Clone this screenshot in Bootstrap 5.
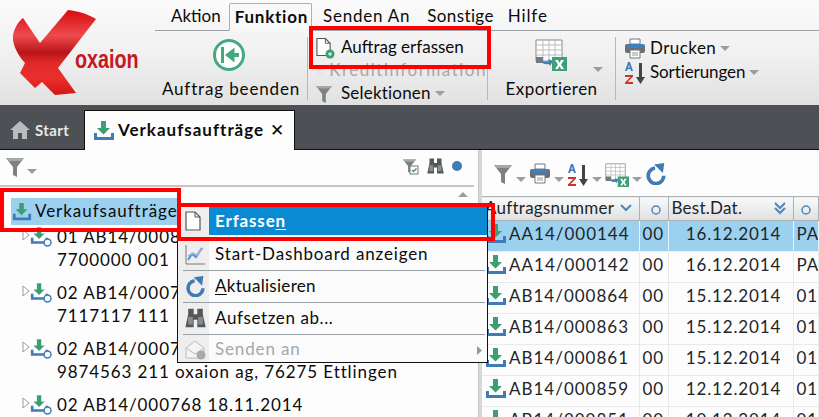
<!DOCTYPE html>
<html lang="de"><head><meta charset="utf-8"><title>oxaion</title>
<link href="https://cdn.jsdelivr.net/npm/bootstrap@5.3.0/dist/css/bootstrap.min.css" rel="stylesheet">
<style>
html,body{margin:0;width:819px;height:417px;overflow:hidden;background:#fdfdfd}
body{font-family:Lato,"Liberation Sans",sans-serif;font-size:17px;color:#0b0b0b;letter-spacing:.85px;line-height:1.2;position:relative}
.ribbon{height:105px;background:linear-gradient(#fbfbfb,#f1f1f1 50%,#e1e1e1)}
.logo-box{width:155px;flex:none;position:relative}
.logo-word{position:absolute;left:75px;top:44px;font:bold 26px "Liberation Sans",sans-serif;letter-spacing:0;color:#c4191f;transform:scaleX(.76);transform-origin:left center}
.menu-row{height:31px;border-bottom:1px solid #9da3a8;padding-left:8px}
.menu-item{padding:6px 8px 0 8px;height:30px}
.menu-on{font-weight:700;border:1px solid #aab0b4;border-bottom:1px solid #f8f8f8;border-radius:2px 2px 0 0;height:28px;margin-top:3px;padding:3px 3px 0 5px;background:#f9f9f9;margin-left:0;letter-spacing:.75px}
.m-akt{letter-spacing:0}
.m-send{margin-left:3px;letter-spacing:.75px}
.m-son{margin-left:1px;letter-spacing:.4px}
.m-hlf{margin-left:-2px}
.rib-body{height:74px;padding-top:6px}
.rib-group{border-right:1px solid #b5b8ba;height:63px;flex:none}
.rg-end{width:153px}
.rg-act{width:180px;padding-left:4px}
.rg-exp{width:128px}
.rib-big{display:flex;flex-direction:column;align-items:center}
.rib-line{height:23px;white-space:nowrap}
.rib-first{margin-top:-1px}
.rl-tall{height:25px}
.ic-end{display:block;margin:2px 4px 0 0}
.ic-act{margin-left:3px;margin-right:4px}
.ic-exp{display:block;margin:2px 0 0 47px}
.lbl-end{margin-top:8px}
.lbl-exp{display:block;text-align:center;margin-top:8px;letter-spacing:.45px}
.car-exp{position:absolute;left:101px;top:30px}
.t-erf{letter-spacing:0}
.t-kre{letter-spacing:1.5px}
.t-sel{letter-spacing:.2px}
.t-dru{letter-spacing:.45px}
.t-sor{letter-spacing:-.1px}
.off{color:#a7a7a7}
.caret-s{display:inline-block;border:5px solid transparent;border-top:5px solid #9a9ea1;border-bottom:0;margin-left:4px;vertical-align:middle}
.car-tb{margin-top:14px;margin-left:0}
.car-lt{margin-top:14px;margin-left:2px}
.tabbar{height:45px;background:#4d5054;border-bottom:1px solid #101010}
.tab-start{color:#e8e8e8;font-weight:700;padding:0 9px;width:84px;margin-top:5px;height:39px;font-size:15px;letter-spacing:.4px}
.tab-act{background:#fdfdfd;font-weight:700;width:211px;height:40px;margin-top:5px;border:1px solid #101010;border-bottom:0;padding-left:8px;letter-spacing:1px}
.ic-tab{margin-right:3px}
.tab-x{margin-left:6px;font-weight:400}
.work{height:267px}
.left-pane{width:478px;flex:none;overflow:hidden;position:relative}
.split{width:4px;flex:none;background:#d6d8da;border-left:1px solid #c2c4c6}
.right-pane{flex:1;min-width:0;overflow:hidden}
.left-tools{height:37px;border-bottom:2px solid #c4c6c8;padding:5px 12px 0 5px;width:474px}
.lt-right{height:20px;margin-top:1px}
.scroll-up{position:absolute;left:458px;top:42px;border:5px solid transparent;border-bottom:5px solid #9a9ea1;border-top:0}
.tree-root{height:27px;width:166px;margin:11px 0 0 11px;background:#9bd0ee;padding-left:1px;white-space:nowrap;letter-spacing:.95px}
.ic-root{margin-right:1px;flex-shrink:0}
.tree-node{height:56px;padding-left:22px;white-space:nowrap;letter-spacing:.9px;padding-top:1px}
.tw{width:8px;height:12px;flex:none;margin-top:3px}
.node-txt{line-height:23px;margin-left:5px;margin-top:-1px}
.right-tools{height:46px;padding:13px 0 0 11px;gap:3px}
.grid-tbl{table-layout:fixed;width:337px;margin:0;--bs-table-bg:transparent;font-size:17px;letter-spacing:1px}
.grid-tbl th,.grid-tbl td{padding:0 3px;height:31px;border:0;border-right:1px solid #e9eaeb;border-bottom:1px solid #e9eaeb;white-space:nowrap;overflow:hidden;vertical-align:middle;font-weight:400}
.grid-tbl td{padding-bottom:4px}
.grid-tbl th{height:24px;background:linear-gradient(#fafafa,#dedfe0);border-top:1px solid #aeb1b3;border-right:1px solid #aeb1b3;border-bottom:1px solid #aeb1b3;letter-spacing:.25px}
.grid-tbl tr.sel-row td{background:#9bd0ee;border-color:#e8f4fb}
.grid-tbl td.td-date{text-align:center;padding-left:6px;padding-right:0;letter-spacing:.85px}
.c-nr{width:157px}.c-st{width:29px}.c-dt{width:125px}
.cell-nr{display:flex;align-items:center;gap:2px}
.ctx{position:absolute;left:177px;top:206px;width:311px;height:157px;background:#fbfbfb;border:1px solid #111;z-index:5}
.ctx-strip{position:absolute;left:0;top:0;bottom:0;width:31px;background:#eeeeee}
.ctx-row{position:relative;height:31.7px;padding-left:37px;display:flex;align-items:center;white-space:nowrap;letter-spacing:.85px}
.ctx-row+.ctx-row::before{content:"";position:absolute;left:5px;right:2px;top:0;height:1px;background:#9aa1a6}
.ctx-on{background:#0a8ad2;color:#fff;font-weight:700;margin-left:31px;padding-left:6px;height:28px;margin-bottom:3.700px}
.ctx-ic{position:absolute;left:7px}
.ctx-ic-on{left:-24px}
.t-akt{letter-spacing:.3px}
.t-auf{letter-spacing:.6px}
.ctx-more{position:absolute;right:5px;top:12px}
.ann{position:absolute;border:4px solid #f00;z-index:6}
.an1{left:309px;top:26px;width:182px;height:43px}
.an2{left:0;top:188px;width:181px;height:44px}
.an3{left:177px;top:203px;width:318px;height:38px}
u{text-underline-offset:2px}
</style></head><body>
<svg width="0" height="0" class="position-absolute">
<symbol id="dl" viewBox="0 0 22 22"><path d="M8 1h5v7h4l-6.500 6.500L4 8h4z" fill="#3c9f6f"/><path d="M1 13h3v4h14v-4h3v7H1z" fill="#3f7bb5"/></symbol>
<symbol id="fil" viewBox="0 0 20 22"><path d="M1 2h18l-7 9v10l-4-2v-8z" fill="#7d8184"/><path d="M1 2h18l-3 3H4z" fill="#a6a9ab"/></symbol>
<symbol id="print" viewBox="0 0 22 22"><path d="M6 1h10v5H6z" fill="#fff" stroke="#777"/><rect x="1" y="6" width="20" height="9" rx="2" fill="#6b6f72"/><rect x="3" y="6" width="16" height="4" fill="#3f7fbd"/><path d="M6 12h10v8H6z" fill="#fff" stroke="#777"/><path d="M8 15h6M8 17h6" stroke="#999"/></symbol>
<symbol id="az" viewBox="0 0 22 24"><path d="M15 2h3v14h3l-4.500 7L12 16h3z" fill="#444"/><path d="M1 10l3-9h2l3 9H7l-.7-2H3.700L3 10zM4.200 6.500h1.600L5 3.500z" fill="#3f7fbd"/><path d="M1 14h8v1.600L3.700 21H9v2H1v-1.600L6.300 16H1z" fill="#c9352b"/></symbol>
<symbol id="xls" viewBox="0 0 32 32"><path d="M1 1h26v21H1z" fill="#fff" stroke="#888"/><path d="M1 6h26M1 11h26M1 16h26M8 1v21M14 1v21M20 1v21" stroke="#bbb"/><path d="M1 18h7v6H1z" fill="#777"/><path d="M5 20c3 3 6 3 9 2l-1-2 5 2-3 5-1-2c-4 1-7 0-9-5z" fill="#3f7fbd"/><rect x="17" y="18" width="15" height="14" fill="#3f9f77"/><path d="M20 21h3l1.500 3 1.500-3h3l-3 4.500 3 4.500h-3l-1.500-3-1.500 3h-3l3-4.500z" fill="#fff"/></symbol>
<symbol id="ref" viewBox="0 0 24 24"><path d="M11 5.500A8.500 8.500 0 1 0 20.500 14" fill="none" stroke="#3f7bb5" stroke-width="4"/><path d="M10 1.500l11-1.500-1.500 11z" fill="#3f7bb5"/></symbol>
<symbol id="bino" viewBox="0 0 22 24"><path d="M3 2h6v6h4V2h6v6l3 14h-9v-8H9v8H0L3 8z" fill="#55585a"/><path d="M3 11h5v8H3zM14 11h5v8h-5z" fill="#8a8d8f"/></symbol>
<symbol id="docp" viewBox="0 0 17 20"><path d="M1 1h9l5 5v13H1z" fill="#fff" stroke="#555" stroke-width="1.200"/><path d="M10 1v5h5" fill="none" stroke="#555"/></symbol>
<symbol id="tw" viewBox="0 0 8 12"><path d="M1 1l6 5-6 5z" fill="#fff" stroke="#999"/></symbol>
<symbol id="node" viewBox="0 0 22 22"><use href="#dl" width="19" height="20"/><circle cx="17.500" cy="16.500" r="3.500" fill="#fff" stroke="#3f7bb5" stroke-width="1.500"/></symbol>
<symbol id="chev" viewBox="0 0 12 8"><path d="M1 1l5 5 5-5" fill="none" stroke="#4d86bd" stroke-width="2"/></symbol>
<symbol id="chev2" viewBox="0 0 12 13"><path d="M1 1l5 5 5-5M1 6l5 5 5-5" fill="none" stroke="#4d86bd" stroke-width="2"/></symbol>
<symbol id="ring" viewBox="0 0 10 10"><circle cx="5" cy="5" r="4" fill="none" stroke="#4d86bd" stroke-width="1.500"/></symbol>
</svg>

<header class="ribbon d-flex">
 <div class="logo-box">
  <svg width="100" height="100" viewBox="0 0 100 100" class="position-absolute top-0 start-0"><defs><linearGradient id="rg" x1="0" y1="0" x2="0" y2="1"><stop offset="0" stop-color="#d90b0f"/><stop offset=".3" stop-color="#ee4a4e"/><stop offset=".5" stop-color="#b91418"/><stop offset=".62" stop-color="#e02a2a"/><stop offset=".8" stop-color="#ea2f2c"/><stop offset="1" stop-color="#d41418"/></linearGradient></defs>
   <path d="M23 18L40 43 68 10C78 11 88 14 96 19L58 68 76 93 55 95 42 82 35 88 20 73 25 63C18 55 12 45 13 35 15 27 18 22 23 18z" fill="url(#rg)"/></svg>
  <span class="logo-word">oxaion</span>
 </div>
 <div class="flex-grow-1 min-w-0">
  <nav class="menu-row d-flex">
   <span class="menu-item m-akt">Aktion</span><span class="menu-item menu-on">Funktion</span><span class="menu-item m-send">Senden An</span><span class="menu-item m-son">Sonstige</span><span class="menu-item m-hlf">Hilfe</span>
  </nav>
  <div class="rib-body d-flex">
   <div class="rib-group rib-big rg-end">
    <svg width="32" height="32" viewBox="0 0 32 32" class="ic-end"><circle cx="16" cy="16" r="14.500" fill="#fff" stroke="#45a97f" stroke-width="3"/><path d="M8 8h3v16H8zM21.500 8.500L12 16l9.500 7.500V18H26v-4h-4.500z" fill="#45a97f"/></svg>
    <span class="lbl-end">Auftrag beenden</span>
   </div>
   <div class="rib-group rg-act">
    <div class="rib-line rib-first d-flex align-items-center"><svg width="22" height="22" viewBox="0 0 22 22" class="ic-act"><use href="#docp" x="1" width="16" height="20"/><circle cx="15" cy="17" r="4.500" fill="#3c9f6f"/><path d="M13 17h4M15 15v4" stroke="#fff"/></svg><span class="t-erf">Auftrag erfassen</span></div>
    <div class="rib-line d-flex align-items-center off"><svg width="22" height="16" viewBox="0 0 18 16" class="ic-act"><path d="M1 1h14v7H1z" fill="#ddd"/><path d="M3 11h12v2H3z" fill="#ddd"/></svg><span class="t-kre">Kreditinformation</span></div>
    <div class="rib-line d-flex align-items-center"><svg width="22" height="20" class="ic-act"><use href="#fil" width="18" height="20"/></svg><span class="t-sel">Selektionen</span><i class="caret-s"></i></div>
   </div>
   <div class="rib-group position-relative rg-exp">
    <svg width="32" height="32" class="ic-exp"><use href="#xls" width="32" height="32"/></svg>
    <span class="lbl-exp">Exportieren</span>
    <i class="caret-s car-exp"></i>
   </div>
   <div class="ps-2">
    <div class="rib-line rl-tall rib-first d-flex align-items-center"><svg width="22" height="22"><use href="#print" width="22" height="22"/></svg><span class="ms-1 t-dru">Drucken</span><i class="caret-s"></i></div>
    <div class="rib-line d-flex align-items-center"><svg width="22" height="24"><use href="#az" width="22" height="24"/></svg><span class="ms-1 t-sor">Sortierungen</span><i class="caret-s"></i></div>
   </div>
  </div>
 </div>
</header>

<div class="tabbar d-flex">
 <div class="tab-start d-flex align-items-center"><svg width="22" height="20" viewBox="0 0 22 20" class="me-1"><path d="M11 1L1 10h3v9h5v-6h4v6h5v-9h3z" fill="#b9bcbe"/></svg>Start</div>
 <div class="tab-act d-flex align-items-center"><svg width="22" height="22" class="ic-tab"><use href="#dl" width="22" height="22"/></svg>Verkaufsaufträge<span class="tab-x">✕</span></div>
</div>

<main class="work d-flex">
 <section class="left-pane">
  <div class="left-tools d-flex justify-content-between">
   <span class="d-flex"><svg width="20" height="24"><use href="#fil" width="20" height="24"/></svg><i class="caret-s car-lt"></i></span>
   <span class="d-flex align-items-center gap-2 lt-right"><svg width="17" height="17" viewBox="0 0 17 17"><use href="#fil" width="15" height="16"/><rect x="8" y="8" width="8" height="8" fill="#fff" stroke="#777"/><path d="M10 12l1.500 1.500 3-3" fill="none" stroke="#3c9f6f" stroke-width="1.500"/></svg><svg width="17" height="18"><use href="#bino" width="17" height="18"/></svg><svg width="10" height="10"><circle cx="5" cy="5" r="5" fill="#3f7bb5"/></svg></span>
  </div>
  <i class="scroll-up"></i>
  <div class="tree-root d-flex align-items-center"><svg width="22" height="22" class="ic-root"><use href="#dl" width="20" height="22"/></svg>Verkaufsaufträge</div>
  <div class="tree-node d-flex"><svg class="tw"><use href="#tw" width="8" height="12"/></svg><svg width="22" height="22"><use href="#node" width="22" height="22"/></svg><div class="node-txt">01 AB14/0008<br>7700000 001</div></div>
  <div class="tree-node d-flex"><svg class="tw"><use href="#tw" width="8" height="12"/></svg><svg width="22" height="22"><use href="#node" width="22" height="22"/></svg><div class="node-txt">02 AB14/0007<br>7117117 111</div></div>
  <div class="tree-node d-flex"><svg class="tw"><use href="#tw" width="8" height="12"/></svg><svg width="22" height="22"><use href="#node" width="22" height="22"/></svg><div class="node-txt">02 AB14/0007<br>9874563 211 oxaion ag, 76275 Ettlingen</div></div>
  <div class="tree-node d-flex"><svg class="tw"><use href="#tw" width="8" height="12"/></svg><svg width="22" height="22"><use href="#node" width="22" height="22"/></svg><div class="node-txt">02 AB14/000768 18.11.2014</div></div>
 </section>
 <div class="split"></div>
 <section class="right-pane">
  <div class="right-tools d-flex align-items-start">
   <svg width="20" height="22"><use href="#fil" width="20" height="22"/></svg><i class="caret-s car-tb"></i>
   <svg width="22" height="22"><use href="#print" width="22" height="22"/></svg><i class="caret-s car-tb"></i>
   <svg width="22" height="24"><use href="#az" width="22" height="24"/></svg><i class="caret-s car-tb"></i>
   <svg width="24" height="24"><use href="#xls" width="24" height="24"/></svg><i class="caret-s car-tb"></i>
   <svg width="22" height="22"><use href="#ref" width="22" height="22"/></svg>
  </div>
  <table class="table grid-tbl">
   <colgroup><col class="c-nr"><col class="c-st"><col class="c-dt"><col></colgroup>
   <thead><tr><th><div class="d-flex justify-content-between align-items-center">Auftragsnummer<svg width="12" height="8" class="me-1"><use href="#chev" width="12" height="8"/></svg></div></th><th class="text-end"><svg width="10" height="10" class="me-1"><use href="#ring" width="10" height="10"/></svg></th><th><div class="d-flex justify-content-between align-items-center">Best.Dat.<svg width="12" height="13" class="me-1"><use href="#chev2" width="12" height="13"/></svg></div></th><th><svg width="10" height="10" class="ms-1"><use href="#ring" width="10" height="10"/></svg></th></tr></thead>
   <tbody>
    <tr class="sel-row"><td><div class="cell-nr"><svg width="22" height="22"><use href="#dl" width="22" height="22"/></svg>AA14/000144</div></td><td>00</td><td class="td-date">16.12.2014</td><td>PA</td></tr>
    <tr><td><div class="cell-nr"><svg width="22" height="22"><use href="#dl" width="22" height="22"/></svg>AA14/000142</div></td><td>00</td><td class="td-date">16.12.2014</td><td>PA</td></tr>
    <tr><td><div class="cell-nr"><svg width="22" height="22"><use href="#dl" width="22" height="22"/></svg>AB14/000864</div></td><td>00</td><td class="td-date">15.12.2014</td><td>01</td></tr>
    <tr><td><div class="cell-nr"><svg width="22" height="22"><use href="#dl" width="22" height="22"/></svg>AB14/000863</div></td><td>00</td><td class="td-date">15.12.2014</td><td>01</td></tr>
    <tr><td><div class="cell-nr"><svg width="22" height="22"><use href="#dl" width="22" height="22"/></svg>AB14/000861</div></td><td>00</td><td class="td-date">15.12.2014</td><td>01</td></tr>
    <tr><td><div class="cell-nr"><svg width="22" height="22"><use href="#dl" width="22" height="22"/></svg>AB14/000859</div></td><td>00</td><td class="td-date">12.12.2014</td><td>01</td></tr>
    <tr><td><div class="cell-nr"><svg width="22" height="22"><use href="#dl" width="22" height="22"/></svg>AB14/000851</div></td><td>00</td><td class="td-date">10.12.2014</td><td>01</td></tr>
   </tbody>
  </table>
 </section>
</main>

<div class="ctx">
 <div class="ctx-strip"></div>
 <div class="ctx-row ctx-on"><svg class="ctx-ic ctx-ic-on" width="17" height="20"><use href="#docp" width="17" height="20"/></svg>Erfasse<u>n</u></div>
 <div class="ctx-row"><svg class="ctx-ic" width="21" height="21" viewBox="0 0 21 21"><path d="M1 1v19h19" fill="none" stroke="#777"/><path d="M3 16l4-6 4 3 6-9" fill="none" stroke="#5b8fc7" stroke-width="2"/><path d="M3 12l5-3 4 2 6-7" fill="none" stroke="#9bb8d8" stroke-width="1.500"/></svg>Start-Dashboard anzeigen</div>
 <div class="ctx-row"><svg class="ctx-ic" width="21" height="21"><use href="#ref" width="21" height="21"/></svg><span class="t-akt"><u>A</u>ktualisieren</span></div>
 <div class="ctx-row"><svg class="ctx-ic" width="21" height="22"><use href="#bino" width="21" height="22"/></svg><span class="t-auf">Aufsetzen ab...</span></div>
 <div class="ctx-row off"><svg class="ctx-ic" width="21" height="20" viewBox="0 0 21 20"><path d="M1 8l9-7 9 7v10H1z" fill="#f4f4f4" stroke="#bbb"/><path d="M1 8l9 6 9-6" fill="none" stroke="#bbb"/><circle cx="16" cy="15" r="4.500" fill="#aaa"/></svg>Senden an<svg class="ctx-more" width="5" height="9"><path d="M0 0l5 4.500L0 9z" fill="#999"/></svg></div>
</div>
<div class="ann an1"></div><div class="ann an2"></div><div class="ann an3"></div>
</body></html>
